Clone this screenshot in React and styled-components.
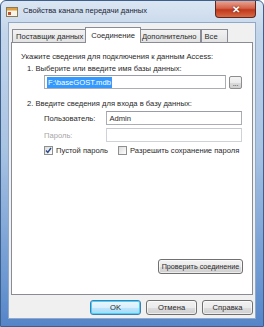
import React from 'react';
import styled, { createGlobalStyle } from 'styled-components';

const GlobalStyle = createGlobalStyle`
  html, body {
    margin: 0;
    padding: 0;
    background: #ffffff;
  }
  body {
    font-family: "Liberation Sans", Arial, sans-serif;
    font-size: 7.6px;
    color: #2a2a2a;
  }
`;

const Window = styled.div`
  width: 264px;
  height: 327px;
  box-sizing: border-box;
  display: flex;
  flex-direction: column;
  border: 1px solid #3d5f8c;
  border-radius: 6px 6px 0 0;
  background: linear-gradient(to bottom, #dbe6f2 0%, #c3d5ea 10%, #a9c3e3 45%, #6d98d2 85%, #5584c8 100%);
  overflow: hidden;
`;

const TitleBar = styled.div`
  height: 21px;
  display: flex;
  align-items: flex-start;
  padding: 0 7px 0 5px;
`;

const AppIcon = styled.svg`
  width: 12px;
  height: 12px;
  margin-top: 5px;
  flex-shrink: 0;
`;

const Title = styled.div`
  flex: 1;
  margin-top: 5px;
  margin-left: 5px;
  font-size: 7.6px;
  color: #1b2535;
  white-space: nowrap;
`;

const CloseButton = styled.div`
  width: 41px;
  height: 17px;
  border: 1px solid #5d2820;
  border-top: none;
  border-radius: 0 0 4px 4px;
  background: linear-gradient(to bottom, #e8a493 0%, #d5634a 45%, #c0381c 55%, #d66a45 100%);
  display: flex;
  align-items: center;
  justify-content: center;
  color: #ffffff;
  font-weight: bold;
  font-size: 10px;
  box-sizing: border-box;
  text-shadow: 0 0 2px #5a1a10;
`;

const Client = styled.div`
  flex: 1;
  margin: 0 7px 7px 7px;
  background: #f0f0f0;
  border: 1px solid #8fa9c9;
  display: flex;
  flex-direction: column;
  padding: 4px 2px 0 2px;
`;

const TabStrip = styled.div`
  display: flex;
  align-items: flex-end;
  height: 16px;
  padding-left: 1px;
  position: relative;
  z-index: 1;
`;

const Tab = styled.div`
  height: ${p => (p.$active ? '16px' : '14px')};
  min-width: ${p => (p.$last ? '27px' : '0')};
  box-sizing: border-box;
  padding: 0 ${p => (p.$active ? '5px' : '3px')};
  margin: 0 ${p => (p.$active ? '-2px' : '0')};
  border: 1px solid #898c95;
  border-bottom: ${p => (p.$active ? 'none' : '1px solid #898c95')};
  border-left: ${p => (p.$last || p.$active || p.$first ? '1px solid #898c95' : 'none')};
  background: ${p => (p.$active ? '#ffffff' : 'linear-gradient(to bottom, #f2f2f2, #e3e3e3)')};
  display: flex;
  align-items: center;
  white-space: nowrap;
  position: relative;
  z-index: ${p => (p.$active ? 2 : 0)};
`;

const Panel = styled.div`
  height: 253px;
  box-sizing: border-box;
  background: #ffffff;
  border: 1px solid #898c95;
  margin-top: -1px;
  padding: 8px 10px 0 9px;
  display: flex;
  flex-direction: column;
`;

const Line = styled.div`
  height: 12px;
  line-height: 12px;
  white-space: nowrap;
  padding-left: ${p => p.$indent || 0}px;
  margin-top: ${p => p.$top || 0}px;
`;

const FieldRow = styled.div`
  display: flex;
  align-items: center;
  gap: 3px;
  margin-top: ${p => p.$top || 0}px;
  padding-left: ${p => p.$indent || 0}px;
`;

const TextBox = styled.div`
  height: 14px;
  box-sizing: border-box;
  border: 1px solid ${p => (p.$disabled ? '#cfd3d8' : '#abadb3')};
  border-top-color: ${p => (p.$disabled ? '#c5c9cf' : '#9a9da5')};
  background: #ffffff;
  width: ${p => p.$width}px;
  display: flex;
  align-items: center;
  padding-left: 2px;
  white-space: nowrap;
`;

const Selected = styled.span`
  background: #3399ff;
  color: #ffffff;
  padding: 0 1px;
  line-height: 11px;
`;

const Label = styled.div`
  width: ${p => p.$width}px;
  color: ${p => (p.$muted ? '#a6a6a6' : '#2a2a2a')};
  white-space: nowrap;
`;

const SmallButton = styled.div`
  width: 13px;
  height: 13px;
  box-sizing: border-box;
  border: 1px solid #8d8d8d;
  border-radius: 2px;
  background: linear-gradient(to bottom, #f4f4f4 0%, #ebebeb 50%, #dbdbdb 51%, #cfcfcf 100%);
  display: flex;
  align-items: flex-end;
  justify-content: center;
  font-size: 7px;
  line-height: 9px;
`;

const CheckRow = styled.div`
  display: flex;
  align-items: center;
  margin-top: 4px;
  padding-left: 23px;
`;

const CheckItem = styled.label`
  display: flex;
  align-items: center;
  gap: 3px;
  width: ${p => p.$width || 'auto'};
  white-space: nowrap;
`;

const Box = styled.span`
  width: 9px;
  height: 9px;
  box-sizing: border-box;
  border: 1px solid #8e8f8f;
  background: linear-gradient(135deg, #dcdcdc, #ffffff);
  display: flex;
  align-items: center;
  justify-content: center;
`;

const Spacer = styled.div`
  flex: 1;
`;

const PanelFooter = styled.div`
  display: flex;
  justify-content: flex-end;
  margin-bottom: 20px;
  margin-right: -1px;
`;

const Button = styled.div`
  width: ${p => p.$width}px;
  height: 15px;
  box-sizing: border-box;
  border: 1px solid ${p => (p.$default ? '#3c7fb1' : '#707070')};
  border-radius: 3px;
  background: ${p => (p.$default
    ? 'linear-gradient(to bottom, #eaf6fd 0%, #d9f0fc 50%, #bee6fd 51%, #a7d9f5 100%)'
    : 'linear-gradient(to bottom, #f2f2f2 0%, #ebebeb 50%, #dddddd 51%, #cfcfcf 100%)')};
  box-shadow: inset 0 0 0 1px ${p => (p.$default ? '#48d2fb' : 'rgba(255,255,255,0.6)')};
  display: flex;
  align-items: center;
  justify-content: center;
  white-space: nowrap;
  font-size: ${p => (p.$small ? '7.2px' : '7.6px')};
`;

const DialogButtons = styled.div`
  display: flex;
  justify-content: flex-end;
  gap: 5px;
  padding: 5px 0 0 0;
`;

function Check({ checked }) {
  return (
    <Box>
      {checked && (
        <svg width="7" height="7" viewBox="0 0 7 7">
          <path d="M1 3.5 L2.8 5.5 L6 1" fill="none" stroke="#2b4a8a" strokeWidth="1.4" />
        </svg>
      )}
    </Box>
  );
}

export default function App() {
  return (
    <>
      <GlobalStyle />
      <Window>
        <TitleBar>
          <AppIcon viewBox="0 0 12 12">
            <rect x="0.5" y="1.5" width="11" height="9" fill="#f7f3e6" stroke="#8a7a55" />
            <rect x="1" y="2" width="10" height="2.5" fill="#e0a040" />
            <rect x="2" y="6" width="3" height="3" fill="#c05030" />
          </AppIcon>
          <Title>Свойства канала передачи данных</Title>
          <CloseButton>✕</CloseButton>
        </TitleBar>
        <Client>
          <TabStrip>
            <Tab $first>Поставщик данных</Tab>
            <Tab $active>Соединение</Tab>
            <Tab>Дополнительно</Tab>
            <Tab $last>Все</Tab>
          </TabStrip>
          <Panel>
            <Line>Укажите сведения для подключения к данным Access:</Line>
            <Line $indent={6}>1. Выберите или введите имя базы данных:</Line>
            <FieldRow $indent={23}>
              <TextBox $width={185}><Selected>F:\baseGOST.mdb</Selected></TextBox>
              <SmallButton>...</SmallButton>
            </FieldRow>
            <Line $indent={6} $top={9}>2. Введите сведения для входа в базу данных:</Line>
            <FieldRow $indent={23} $top={1}>
              <Label $width={60}>Пользователь:</Label>
              <TextBox $width={137}>Admin</TextBox>
            </FieldRow>
            <FieldRow $indent={23} $top={3}>
              <Label $width={60} $muted>Пароль:</Label>
              <TextBox $width={137} $disabled />
            </FieldRow>
            <CheckRow>
              <CheckItem $width="74px"><Check checked />Пустой пароль</CheckItem>
              <CheckItem><Check />Разрешить сохранение пароля</CheckItem>
            </CheckRow>
            <Spacer />
            <PanelFooter>
              <Button $width={85} $small>Проверить соединение</Button>
            </PanelFooter>
          </Panel>
          <DialogButtons>
            <Button $width={51} $default>OK</Button>
            <Button $width={51}>Отмена</Button>
            <Button $width={51}>Справка</Button>
          </DialogButtons>
        </Client>
      </Window>
    </>
  );
}
